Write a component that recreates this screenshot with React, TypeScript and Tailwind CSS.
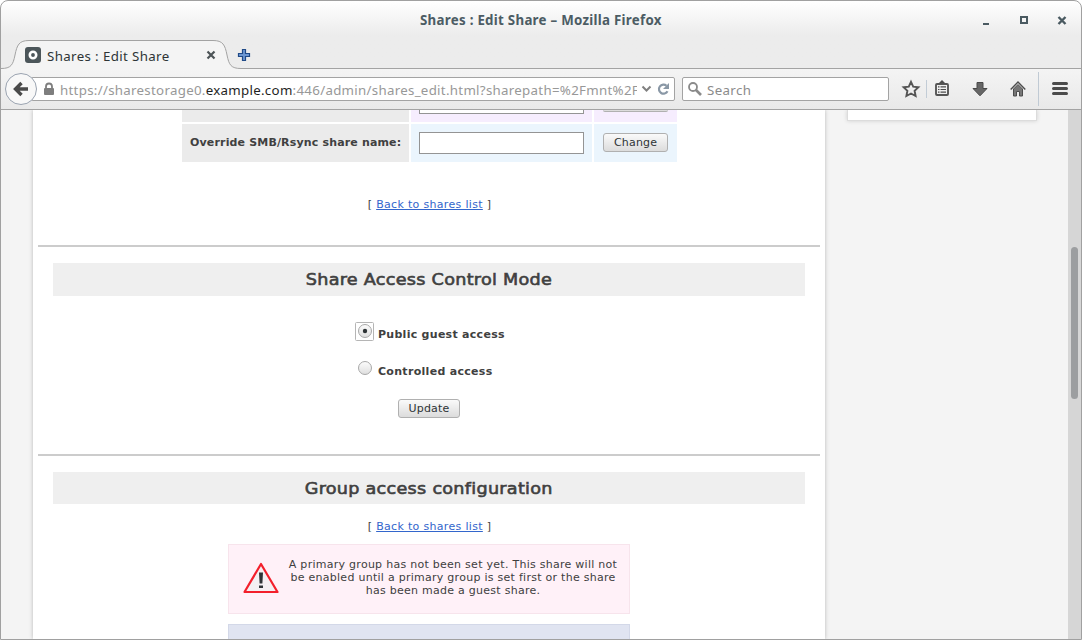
import React from "react";

const ui = "font-['Noto_Sans',sans-serif]";
const iconStroke = { fill: "none", stroke: "#555", strokeWidth: 1.9 } as const;

function TitleBar() {
  return (
    <div className="flex h-[39px] shrink-0 items-center">
      <div className="w-[419px]" />
      <div className={`${ui} w-[243px] whitespace-nowrap text-[13.3px] font-bold tracking-[0.28px] text-[#4c5c64]`}>
        Shares : Edit Share – Mozilla Firefox
      </div>
      <svg className="ml-auto mr-[12px]" width="90" height="16" viewBox="0 0 90 16">
        <rect x="4" y="10" width="6" height="2" fill="#4a5a61" />
        <rect x="42" y="4" width="6" height="6" fill="none" stroke="#4a5a61" strokeWidth="2" />
        <path d="M79.500 4l7 7M86.500 4l-7 7" stroke="#4a5a61" strokeWidth="2.400" />
      </svg>
    </div>
  );
}

function TabStrip() {
  return (
    <div className="relative flex h-[29px] shrink-0 items-center">
      <svg className="absolute left-0 top-0" width="1080" height="29" viewBox="0 0 1080 29">
        <path
          d="M0 28.5C10 28.5 12 25 14 15C16 5 18 .5 28 .5H212C222 .5 224 5 226 15C228 25 230 28.5 240 28.5H1080V29H0Z"
          fill="#f4f4f4"
        />
        <path
          d="M0 28.5C10 28.5 12 25 14 15C16 5 18 .5 28 .5H212C222 .5 224 5 226 15C228 25 230 28.5 240 28.5H1080"
          fill="none"
          stroke="#a3a3a3"
        />
      </svg>
      <div className="relative flex w-full items-center">
        <svg className="ml-6" width="16" height="16" viewBox="0 0 16 16">
          <rect width="16" height="16" rx="3" fill="#4c565a" />
          <circle cx="8" cy="8" r="3.200" fill="none" stroke="#fff" strokeWidth="2.600" />
        </svg>
        <span className={`${ui} ml-[6px] w-[159px] whitespace-nowrap pt-[3px] text-[13.3px] leading-5 tracking-[0.37px] text-[#2e3436]`}>
          Shares : Edit Share
        </span>
        <svg width="10" height="10" viewBox="0 0 10 10">
          <path d="M1.500 1.500l7 7M8.500 1.500l-7 7" stroke="#4d5457" strokeWidth="2.200" />
        </svg>
        <svg className="ml-[21px]" width="14" height="14" viewBox="0 0 14 14">
          <path d="M5.500 1.500h3v4h4v3h-4v4h-3v-4h-4v-3h4z" fill="#6d97d2" stroke="#204a87" strokeWidth="1.200" />
        </svg>
      </div>
    </div>
  );
}

function NavBar() {
  return (
    <div className="flex h-[41px] shrink-0 items-center border-b border-[#a3a3a3] bg-linear-to-b from-[#f4f4f4] to-[#e9e9e9]">
      <svg className="relative z-10 ml-1 shrink-0" width="34" height="34" viewBox="0 0 34 34">
        <circle cx="16" cy="17" r="15.500" fill="#f8f8f8" stroke="#9aa3b0" />
        <path d="M16.500 11l-6 6 6 6M11 17h12" fill="none" stroke="#4a4a4a" strokeWidth="3.400" />
      </svg>
      <div className={`${ui} -ml-[8px] flex h-6 w-[644px] shrink-0 items-center rounded-[2px] border border-[#a3a3a3] bg-white text-[13.3px]`}>
        <svg className="ml-[12px] shrink-0" width="10" height="14" viewBox="0 0 10 14">
          <path d="M2 7V4.500a3 3 0 016 0V7" fill="none" stroke="#7e7e7e" strokeWidth="1.800" />
          <rect y="6" width="10" height="7" rx="1" fill="#7e7e7e" />
        </svg>
        <div className="ml-[6px] mt-[3px] w-[577px] overflow-hidden whitespace-nowrap tracking-[0.29px] text-[#989898]">
          https://sharestorage0.<span className="text-[#1f1f1f]">example.com</span>:446/admin/shares_edit.html?sharepath=%2Fmnt%2F
        </div>
        <svg className="ml-[4px] shrink-0" width="32" height="14" viewBox="0 0 32 14">
          <path d="M1.500 4.500l4 4 4-4" fill="none" stroke="#808080" strokeWidth="2" />
          <path d="M25.500 3.800a4.500 4.500 0 101 5.400" fill="none" stroke="#8a98a6" strokeWidth="2.200" />
          <path d="M28 1v6h-6z" fill="#8a98a6" />
        </svg>
      </div>
      <div className={`${ui} ml-[7px] flex h-6 w-[207px] shrink-0 items-center rounded-[2px] border border-[#a3a3a3] bg-white text-[13.3px] text-[#8b8b8b]`}>
        <svg className="ml-[5px] mr-[5px]" width="14" height="14" viewBox="0 0 14 14">
          <circle cx="5" cy="5" r="4" fill="none" stroke="#8b8b8b" strokeWidth="1.800" />
          <path d="M8 8l5 5" stroke="#8b8b8b" strokeWidth="2.600" />
        </svg>
        <span className="mt-[3px] tracking-[0.37px]">Search</span>
      </div>
      <svg className="ml-[11px] shrink-0" width="180" height="34" viewBox="0 0 180 34">
        <path d="M11 9.800l2.200 4.800 5.200.6-3.800 3.600 1 5.200L11 21.500l-4.600 2.500 1-5.200-3.800-3.600 5.200-.6z" {...iconStroke} />
        <path d="M26.500 8v18" stroke="#c2ccd6" />
        <rect x="36" y="12" width="12" height="11" rx="1" {...iconStroke} />
        <path d="M38.500 11.500l3.500-3.500 3.500 3.500z" fill="#4d4d4d" />
        <path d="M38 14.800h1.500m1 0h5.500M38 17.500h1.500m1 0h5.500M38 20.200h1.500m1 0h5.500" stroke="#4d4d4d" strokeWidth="1.200" />
        <path d="M77 10.500h6v6h4l-7 7.300-7-7.300h4z" fill="#666" stroke="#484848" />
        <path d="M110.700 17.500l7.300-7.500 7.300 7.500" fill="none" stroke="#4d4d4d" strokeWidth="1.400" />
        <path d="M113.500 17l4.500-4.500 4.500 4.500v7h-3v-4.500h-3V24h-3z" fill="#777" stroke="#4d4d4d" />
        <path d="M138.500 0v34" stroke="#c0cad4" />
        <path d="M153.500 11.500h13M153.500 16.500h13M153.500 21.500h13" stroke="#4b4b4b" strokeWidth="3" strokeLinecap="round" />
      </svg>
    </div>
  );
}

function GtkButton({ children }: { children: string }) {
  return (
    <button className="h-[19px] rounded-[3px] border border-[#b0b0b0] bg-linear-to-b from-[#fafafa] to-[#dcdcdc] px-[10px] text-[11px] leading-[16px] tracking-[0.18px] text-[#2e3436]">
      {children}
    </button>
  );
}

function SharesTable() {
  return (
    <div className="flex flex-col gap-[2px] pl-[144px]">
      <div className="flex h-3 items-start gap-[2px]">
        <div className="h-full w-[227px] bg-[#ebebeb]" />
        <div className="h-full w-[181px] bg-[#f6edfe] px-2">
          <div className="h-1 w-[165px] border border-t-0 border-[#949494] bg-white" />
        </div>
        <div className="h-full w-[83px] bg-[#f6edfe] pl-[9px]">
          <div className="h-[2px] w-[65px] rounded-b-[3px] border-b border-[#b0b0b0] bg-[#dcdcdc]" />
        </div>
      </div>
      <div className="flex h-[38px] gap-[2px]">
        <div className="w-[227px] whitespace-nowrap bg-[#ebebeb] pl-2 pt-3 text-[11px] font-bold leading-[13px] tracking-[0.16px]">
          Override SMB/Rsync share name:
        </div>
        <div className="w-[181px] bg-[#ebf5fd] px-2 pt-2">
          <div className="h-[22px] w-[165px] border border-[#949494] bg-white" />
        </div>
        <div className="flex w-[83px] items-start bg-[#ebf5fd] pl-[9px] pt-[9px]">
          <GtkButton>Change</GtkButton>
        </div>
      </div>
    </div>
  );
}

function BackLink() {
  return (
    <div className="whitespace-pre pl-px text-center text-[11px] leading-[13px] tracking-[0.32px]">
      [ <a className="text-[#3366cc] underline">Back to shares list</a> ]
    </div>
  );
}

function SectionHeading({ children }: { children: string }) {
  return (
    <div className="mx-[15px] h-full bg-[#efefef] text-center text-[16px] leading-[33px] tracking-[0.25px] text-[#404040] [-webkit-text-stroke:0.6px_#404040]">
      <span className="inline-block scale-x-110">{children}</span>
    </div>
  );
}

function Radio({ checked }: { checked?: boolean }) {
  return (
    <svg width="19" height="19" viewBox="0 0 19 19">
      <defs>
        <linearGradient id="radio" x1="0" y1="0" x2="0" y2="1">
          <stop offset="0" stopColor="#fdfdfd" />
          <stop offset="1" stopColor="#dedede" />
        </linearGradient>
      </defs>
      {checked && <rect x=".5" y=".5" width="18" height="18" rx="1" fill="none" stroke="#b5b5b5" />}
      <circle cx="10" cy="9" r="6.500" fill="url(#radio)" stroke="#a9a9a9" />
      {checked && <circle cx="10" cy="9" r="2.200" fill="#2e3436" />}
    </svg>
  );
}

export default function App() {
  return (
    <div className="h-[640px] w-[1082px] bg-white">
      <div className="flex h-full flex-col overflow-hidden rounded-t-[8px] border border-[#a0a0a0] bg-linear-to-b from-white via-[#ececec] via-[34px] to-[#ececec]">
        <TitleBar />
        <TabStrip />
        <NavBar />
        <div className="flex min-h-0 flex-1 overflow-hidden bg-[#f4f4f4] font-['DejaVu_Sans',sans-serif] text-[#404040]">
          <div className="ml-8 flex w-[792px] shrink-0 flex-col bg-white px-[5px] shadow-[0_0_4px_rgba(0,0,0,0.25)]">
            <SharesTable />
            <div className="mt-9"><BackLink /></div>
            <div className="mt-[34px] h-[2px] shrink-0 bg-[#cccccc]" />
            <div className="mt-4 h-[33px] shrink-0"><SectionHeading>Share Access Control Mode</SectionHeading></div>
            <div className="ml-[317px] mt-[26px] flex h-[19px] shrink-0 gap-1 text-[11px] font-bold leading-[13px] tracking-[0.28px]">
              <Radio checked />
              <span className="pt-[6px]">Public guest access</span>
            </div>
            <div className="ml-[317px] mt-[18px] flex h-[19px] shrink-0 gap-1 text-[11px] font-bold leading-[13px] tracking-[0.3px]">
              <Radio />
              <span className="pt-[6px]">Controlled access</span>
            </div>
            <div className="mt-[21px] flex justify-center"><GtkButton>Update</GtkButton></div>
            <div className="mt-9 h-[2px] shrink-0 bg-[#cccccc]" />
            <div className="mt-4 h-8 shrink-0"><SectionHeading>Group access configuration</SectionHeading></div>
            <div className="mt-4"><BackLink /></div>
            <div className="ml-[190px] mt-[11px] flex h-[70px] w-[402px] shrink-0 border border-[#f7e4ec] bg-[#fff1f8]">
              <svg className="ml-[13px] mt-[16px] shrink-0" width="37" height="34" viewBox="0 0 37 34">
                <path d="M19 3L35.500 31H2.500z" fill="#f4f0f2" stroke="#f3202c" strokeWidth="2.200" strokeLinejoin="round" />
                <path d="M17 11.500h4l-.6 11h-2.800zM17 24.500h4v2.500h-4z" fill="#2e3436" />
              </svg>
              <div className="ml-[6px] w-[336px] whitespace-nowrap pt-[13px] text-center text-[11px] leading-[13px] tracking-[0.27px]">
                A primary group has not been set yet. This share will not<br />
                be enabled until a primary group is set first or the share<br />
                has been made a guest share.
              </div>
            </div>
            <div className="ml-[190px] mt-[10px] h-[70px] w-[402px] shrink-0 border border-[#d3d8e8] bg-[#e0e4f1]" />
          </div>
          <div className="ml-[22px] h-[11px] w-[190px] border border-t-0 border-[#dcdcdc] bg-white shadow-[0_0_4px_rgba(0,0,0,0.15)]" />
          <div className="ml-auto w-[13px] bg-[#d6d6d6] pl-[3px] pt-[137px]">
            <div className="h-[152px] w-[7px] rounded-full bg-[#9c9ea0]" />
          </div>
        </div>
      </div>
    </div>
  );
}
